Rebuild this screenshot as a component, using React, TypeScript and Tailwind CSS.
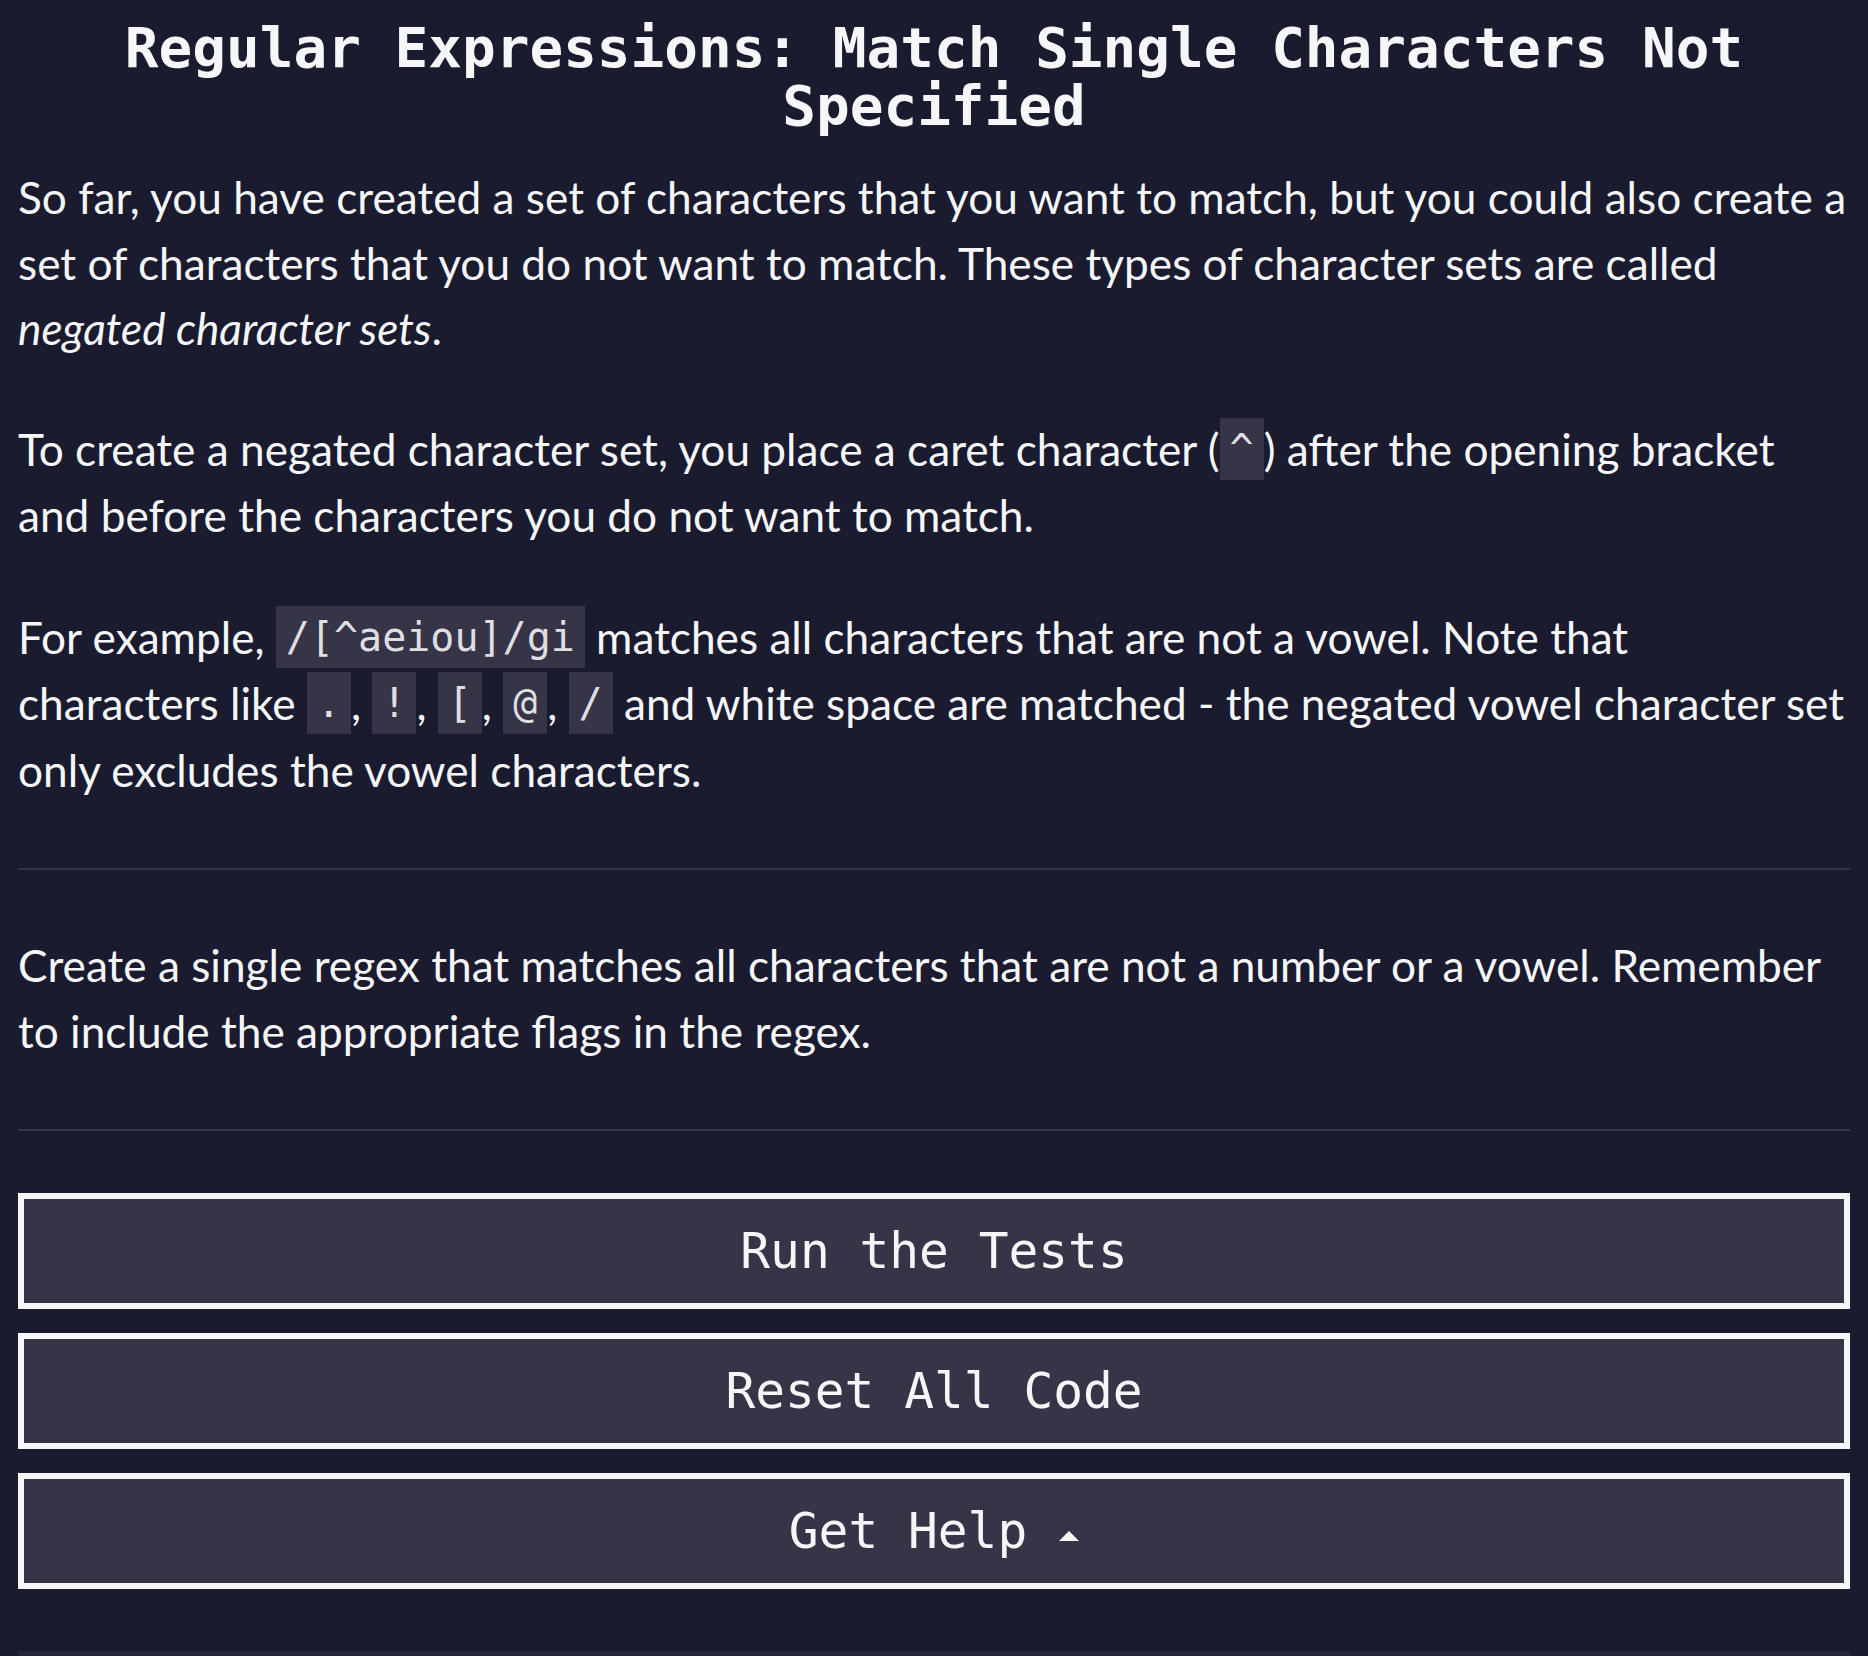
import React from 'react';

const codeCls = "font-['DejaVu_Sans_Mono',monospace] text-[40px] bg-[#363548] text-[#dfdfe2] px-[10px] py-[8px] align-[3px]";

const Code = ({children}: {children: React.ReactNode}) => (
    <code className={codeCls}>{children}</code>
);

const ActionButton = ({children}: {children: React.ReactNode}) => (
    <button
        type="button"
        className="w-full h-[116px] border-[6px] border-[#f5f6f7] bg-[#363548] flex items-center justify-center text-[49.5px] text-[#f5f6f7] font-['DejaVu_Sans_Mono',monospace]">
        {children}
    </button>
);

export default () => {
    return (
        <div className="min-h-screen bg-[#1b1b30] px-[18px] text-[#f5f6f7]">
            <h1 className="pt-[19px] text-center text-[56px] leading-[58px] font-bold font-['DejaVu_Sans_Mono',monospace]">
                Regular Expressions: Match Single Characters Not Specified
            </h1>

            <div className="mt-[29px] text-[44.2px] leading-[65.5px] font-['Lato',sans-serif]">
                <p className="mb-[55px]">
                    So far, you have created a set of characters that you want to match, but you could also create a
                    set of characters that you do not want to match. These types of character sets are called{' '}
                    <em>negated character sets</em>.
                </p>
                <p className="mb-[56px]">
                    To create a negated character set, you place a caret character (<Code>^</Code>) after the opening
                    bracket and before the characters you do not want to match.
                </p>
                <p>
                    For example, <Code>/[^aeiou]/gi</Code> matches all characters that are not a vowel. Note that<br/>
                    characters like <Code>.</Code>, <Code>!</Code>, <Code>[</Code>, <Code>@</Code>, <Code>/</Code> and
                    white space are matched - the negated vowel character set only excludes the vowel characters.
                </p>

                <hr className="mt-[66px] border-0 h-[2px] bg-[#34344a]"/>

                <p className="mt-[62px]">
                    Create a single regex that matches all characters that are not a number or a vowel. Remember to
                    include the appropriate flags in the regex.
                </p>

                <hr className="mt-[66px] border-0 h-[2px] bg-[#34344a]"/>
            </div>

            <div className="mt-[62px] flex flex-col gap-[24px]">
                <ActionButton>Run the Tests</ActionButton>
                <ActionButton>Reset All Code</ActionButton>
                <ActionButton>
                    <span>Get Help</span>
                    <svg className="ml-[32px] mt-[10px]" width="20" height="10" viewBox="0 0 20 10">
                        <polygon points="10,0 20,10 0,10" fill="#f5f6f7"/>
                    </svg>
                </ActionButton>
            </div>

            <div className="mt-[62px] h-[6px] bg-[#26263b]"/>
        </div>
    )
}
